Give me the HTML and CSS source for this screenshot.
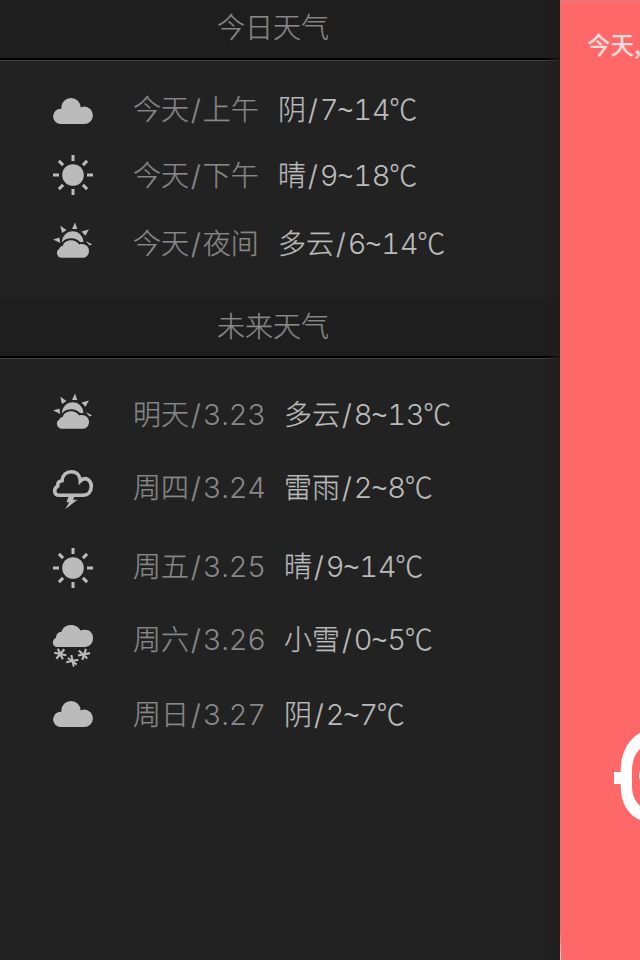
FILE: index.html
```html
<!DOCTYPE html>
<html lang="zh-CN">
<head>
<meta charset="utf-8">
<title>天气</title>
<link rel="stylesheet" href="styles.css">
</head>
<body>
<svg class="defs" aria-hidden="true">
  <symbol id="cloud" viewBox="0 0 44 44">
    <circle cx="9.7" cy="27.4" r="7.6"/><circle cx="20" cy="18.7" r="9.7"/><circle cx="33.2" cy="26.3" r="8.7"/><path d="M9.7 20h23.5v15H9.7z"/>
  </symbol>
  <symbol id="sun" viewBox="0 0 44 44">
    <circle cx="22" cy="22" r="10.8"/>
    <path class="ray" d="M22 2v6M22 36v6M2 22h6M36 22h6M7.900 7.900l4.200 4.200M31.900 31.900l4.200 4.200M7.900 36.100l4.200-4.200M31.900 12.100l4.200-4.200"/>
  </symbol>
  <symbol id="partly" viewBox="0 0 44 44">
    <circle cx="21.7" cy="21" r="10.7"/>
    <path d="M24 1.5l2.300 6.400h-5.200zM9.300 4.700l6.200 4.300-4.500 3zM2.200 18.600l6.200-2.100.9 5.400zM37.900 8.600l-3.500 6.200-3.900-4.300zM34.500 20l6.500 3.200-2.500 1.200z"/>
    <path class="gap" d="M10.500 36.700a4.900 4.900 0 0 1-2-9.200c.1-1.600 1.500-2.600 3.200-2.600 1-3.500 4.300-5.700 8.300-5.700 3.700 0 6.600 1.700 8.300 4.200 5.400-1.600 9.700 2 9.700 6.300 0 4-2.500 7-6 7z"/>
    <path d="M10.500 36.700a4.900 4.900 0 0 1-2-9.200c.1-1.600 1.500-2.600 3.200-2.600 1-3.500 4.300-5.700 8.300-5.700 3.700 0 6.600 1.700 8.300 4.200 5.400-1.600 9.700 2 9.700 6.300 0 4-2.500 7-6 7z"/>
  </symbol>
  <symbol id="thunder" viewBox="0 0 44 46">
    <path class="outline" d="M8 30.200C3 30.200 2 24 6.700 21c-.2-3 1.300-5 4.300-5.300.5-5.500 4.500-8.900 9.500-8.900 5.200 0 8.500 3.500 8.800 9.200 5.500-5.500 11 0 11 5.200 0 5.500-3.500 9-8.300 9z"/>
    <path d="M17.700 31h6l-1.700 3.700h4.500l-12.300 9.600 4-7h-2.700z"/>
  </symbol>
  <symbol id="snow" viewBox="0 0 44 52">
    <path d="M6.500 30C.5 30 .6 22.500 5 20.800c.3-4 2.400-5.800 5.500-6 1-4.300 5-6.800 9.700-6.800 4.400 0 7.800 2.400 9.300 5.600C36.500 11 42 14.500 42 21c0 5.500-3.500 9-8.500 9z"/>
    <g class="flake">
      <path d="M9.300 37m-6-1.200l12 2.400m-8.500-6.400l5 10.400m1.500-10l-8 9.500"/>
      <path d="M21.300 44m-6 1.200l12-2.400m-7-4.800l2.500 11.500m-6-8.500l9 6.500"/>
      <path d="M33 37.300m-6 1.200l12-2.400m-4-4.300l-3.700 11m-3.500-9.300l8.500 8"/>
    </g>
  </symbol>
</svg>
<div class="app">
  <main class="drawer">
    <h2 class="heading first">今日天气</h2>
    <section class="list today">
      <div class="row r1"><svg class="icon"><use href="#cloud"/></svg><span class="day">今天<i>/</i>上午</span><span class="cond">阴<i>/</i><b>7<em>~</em>14</b><small>℃</small></span></div>
      <div class="row r2"><svg class="icon"><use href="#sun"/></svg><span class="day">今天<i>/</i>下午</span><span class="cond">晴<i>/</i><b>9<em>~</em>18</b><small>℃</small></span></div>
      <div class="row r3"><svg class="icon"><use href="#partly"/></svg><span class="day">今天<i>/</i>夜间</span><span class="cond">多云<i>/</i><b>6<em>~</em>14</b><small>℃</small></span></div>
    </section>
    <h2 class="heading">未来天气</h2>
    <section class="list future">
      <div class="row f1"><svg class="icon"><use href="#partly"/></svg><span class="day">明天<i>/</i><b>3.23</b></span><span class="cond">多云<i>/</i><b>8<em>~</em>13</b><small>℃</small></span></div>
      <div class="row f2"><svg class="icon thunder"><use href="#thunder"/></svg><span class="day">周四<i>/</i><b>3.24</b></span><span class="cond">雷雨<i>/</i><b>2<em>~</em>8</b><small>℃</small></span></div>
      <div class="row f3"><svg class="icon"><use href="#sun"/></svg><span class="day">周五<i>/</i><b>3.25</b></span><span class="cond">晴<i>/</i><b>9<em>~</em>14</b><small>℃</small></span></div>
      <div class="row f4"><svg class="icon snow"><use href="#snow"/></svg><span class="day">周六<i>/</i><b>3.26</b></span><span class="cond">小雪<i>/</i><b>0<em>~</em>5</b><small>℃</small></span></div>
      <div class="row f5"><svg class="icon"><use href="#cloud"/></svg><span class="day">周日<i>/</i><b>3.27</b></span><span class="cond">阴<i>/</i><b>2<em>~</em>7</b><small>℃</small></span></div>
    </section>
    <div class="edge-shade"></div>
  </main>
  <aside class="page">
    <p class="page-title">今天,</p>
    <svg class="emblem" viewBox="0 0 26 96"><path d="M26 3C14 9 6.700 24 6.700 40v2H0v12h6.700v2C6.700 73 14 85 26 90V76c-5-5-8-11-8-20V40c0-9 3-16 8-21z"/><path d="M26 41q-2 4.500 0 9z"/></svg>
  </aside>
</div>
</body>
</html>
```
FILE: styles.css
```css
* { box-sizing: border-box; margin: 0; padding: 0; }
body {
  width: 640px;
  height: 960px;
  overflow: hidden;
  background: #222;
  font-family: Inter, "Noto Sans CJK SC", sans-serif;
}
.defs { position: absolute; width: 0; height: 0; }
.app { display: flex; height: 960px; }
.drawer { position: relative; width: 560px; background: #222; }
.heading {
  height: 60px;
  padding-right: 14px;
  border-bottom: 2px solid #000;
  box-shadow: 0 1px #444;
  background: #1e1e1e;
  color: #888;
  font: 300 28px/55px "Noto Sans CJK SC", sans-serif;
  -webkit-text-stroke: .25px;
  text-align: center;
}
.first { line-height: 53px; }
.list { display: flex; flex-direction: column; }
.today { height: 238px; padding-top: 16px; }
.future { padding-top: 20px; }
.row {
  display: grid;
  grid-template-columns: 44px auto auto;
  justify-content: start;
  align-items: center;
  padding-left: 51px;
  font-size: 28px;
  font-weight: 300;
  line-height: 40px;
  white-space: nowrap;
}
.day, .cond { padding-top: 2px; -webkit-text-stroke: .25px; }
.row b {
  font-weight: 300;
  font-size: 29px;
  font-variant-numeric: tabular-nums;
  letter-spacing: -.3px;
  -webkit-text-stroke: 0;
}
.row i { font-style: normal; margin: 0 2px; }
.row em {
  display: inline-block;
  width: 16px;
  margin-left: -1px;
  font: 400 27px/30px "Liberation Sans", sans-serif;
  text-align: center;
}
.row small { margin-left: -1px; font: 300 28px/30px "Noto Sans CJK SC", sans-serif; }
.r1, .r2 { height: 66px; }
.r3 { height: 70px; }
.f1 { height: 72px; }
.f2 { height: 74px; }
.f3 { height: 84px; }
.f4 { height: 62px; }
.f5 { height: 88px; }
.row .day { width: 145px; margin-left: 38px; color: #888; }
.future .day { width: 151px; }
.cond { color: #bbb; }
.icon { width: 44px; height: 44px; fill: #bbb; }
.thunder { height: 46px; margin-top: 2px; }
.snow { height: 52px; margin-top: 8px; }
.r1 .icon { margin-top: 4px; }
.f3 .icon { margin-top: 4px; }
.ray { fill: none; stroke: #bbb; stroke-width: 3; }
.gap { stroke: #222; stroke-width: 4; }
.outline { fill: none; stroke: #bbb; stroke-width: 3.6; }
.flake { fill: none; stroke: #bbb; stroke-width: 2.1; }
.edge-shade {
  position: absolute;
  top: 0;
  right: 0;
  width: 18px;
  height: 960px;
  background: linear-gradient(to right, rgba(28, 28, 28, 0), rgba(28, 28, 28, .85));
}
.page {
  width: 80px;
  overflow: hidden;
  border-top: 1px solid #d08084;
  background: linear-gradient(to bottom, transparent 97%, #ffc8c8) left / 1px 100% no-repeat #ff6868;
}
.page-title {
  height: 729px;
  padding: 26px 0 0 27px;
  color: #ffdede;
  font: 500 23.5px/34px "Noto Sans CJK SC", sans-serif;
  white-space: nowrap;
}
.emblem { display: block; width: 26px; height: 96px; margin-left: 54px; fill: #fff; }
```
